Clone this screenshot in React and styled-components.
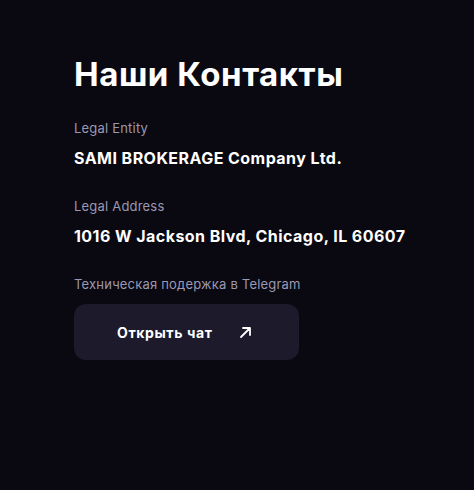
import styled, { createGlobalStyle } from 'styled-components'

const GlobalStyle = createGlobalStyle`
    html, body {
        margin: 0;
        padding: 0;
        background: #0a0911;
    }
    body {
        font-family: Inter, "Noto Sans", sans-serif;
        color: #fff;
    }
`

const fields = [
    { label: 'Legal Entity', value: 'SAMI BROKERAGE Company Ltd.' },
    { label: 'Legal Address', value: '1016 W Jackson Blvd, Chicago, IL 60607' },
]

const ArrowIcon = () => (
    <svg width="13" height="13" viewBox="0 0 13 13" fill="none">
        <path d="M2 11L11 2M4 2h7v7" stroke="#fff" strokeWidth="1.8" strokeLinecap="round" strokeLinejoin="round" />
    </svg>
)

export default function App() {
    return (
        <>
            <GlobalStyle />
            <Page>
                <Title>Наши Контакты</Title>
                {fields.map(f => (
                    <Field key={f.label}>
                        <Label>{f.label}</Label>
                        <Value>{f.value}</Value>
                    </Field>
                ))}
                <Field>
                    <Label>Техническая подержка в Telegram</Label>
                    <ChatBtn type="button">
                        <span>Открыть чат</span>
                        <ArrowIcon />
                    </ChatBtn>
                </Field>
            </Page>
        </>
    )
}

const Page = styled.div`
    width: 474px;
    height: 490px;
    box-sizing: border-box;
    padding: 54px 0 0 74px;
    display: flex;
    flex-direction: column;
`

const Title = styled.h1`
    margin: 0 0 26px;
    font-size: 33px;
    font-weight: 700;
    line-height: 40px;
    letter-spacing: 0.55px;
`

const Field = styled.div`
    display: flex;
    flex-direction: column;
    margin-bottom: 30px;
`

const Label = styled.span`
    font-size: 13px;
    line-height: 16px;
    color: #9b98b3;
    letter-spacing: 0.2px;
    margin-bottom: 12px;
`

const Value = styled.span`
    font-size: 16px;
    font-weight: 700;
    line-height: 20px;
    letter-spacing: 0.45px;
`

const ChatBtn = styled.button`
    width: 225px;
    height: 56px;
    border: none;
    border-radius: 12px;
    background: #1c1a2b;
    color: #fff;
    font-family: inherit;
    font-size: 14px;
    font-weight: 700;
    letter-spacing: 0.6px;
    display: flex;
    align-items: center;
    gap: 27px;
    padding: 0 0 0 43px;
    cursor: pointer;
`
